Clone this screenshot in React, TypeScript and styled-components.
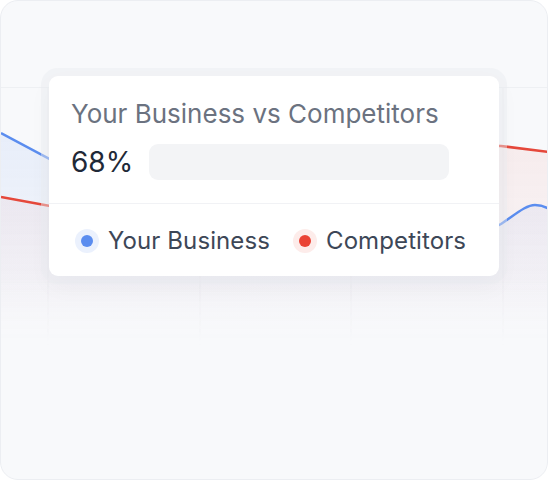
import styled, { createGlobalStyle } from "styled-components";

const GlobalStyle = createGlobalStyle`
  * {
    box-sizing: border-box;
  }

  body {
    margin: 0;
    background-color: #ffffff;
    font-family: Inter, "Noto Sans", "Liberation Sans", sans-serif;
  }
`;

const Frame = styled.div`
  position: relative;
  width: 548px;
  height: 480px;
  background-color: #f8f9fb;
  border: 1px solid #eceef2;
  border-radius: 18px;
  overflow: hidden;
`;

const Chart = styled.div`
  position: absolute;
  left: 0;
  top: 0;
  width: 100%;
  height: 100%;
  -webkit-mask-image: linear-gradient(to bottom, #000 0%, #000 58%, transparent 72%);
  mask-image: linear-gradient(to bottom, #000 0%, #000 58%, transparent 72%);

  svg {
    display: block;
  }
`;

const Tooltip = styled.div`
  position: absolute;
  left: 48px;
  top: 75px;
  width: 450px;
  height: 200px;
  display: flex;
  flex-direction: column;
  background-color: #ffffff;
  border-radius: 9px;
  box-shadow: 0 0 0 8px rgba(233, 235, 240, 0.45),
    0 10px 24px rgba(15, 23, 42, 0.04);
`;

const Top = styled.div`
  display: flex;
  flex-direction: column;
  gap: 14px;
  padding: 22px 22px 0;
  height: 128px;
  border-bottom: 1.5px solid #f1f2f5;
`;

const Title = styled.h2`
  margin: 0;
  font-size: 26px;
  font-weight: 400;
  line-height: 32px;
  color: #6b7280;
`;

const ValueRow = styled.div`
  display: flex;
  align-items: center;
  gap: 16px;
`;

const Value = styled.span`
  font-size: 28px;
  font-weight: 400;
  line-height: 36px;
  color: #1f2937;
`;

const Bar = styled.div`
  width: 300px;
  height: 36px;
  border-radius: 9px;
  background-color: #f3f4f6;
`;

const Legend = styled.div`
  flex: 1;
  display: flex;
  align-items: center;
  gap: 29px;
  padding: 2px 0 0 32px;
`;

const LegendItem = styled.div`
  display: flex;
  align-items: center;
  gap: 15px;
  font-size: 24px;
  line-height: 30px;
  color: #3d4757;
  letter-spacing: 0.1px;
`;

const Dot = styled.span<{ $color: string; $ring: string }>`
  width: 12px;
  height: 12px;
  border-radius: 50%;
  background-color: ${(props) => props.$color};
  box-shadow: 0 0 0 6px ${(props) => props.$ring};
`;

function ChartDrawing() {
  return (
    <svg width="548" height="480" viewBox="0 0 548 480">
      <defs>
        <linearGradient id="blueFill" x1="0" y1="0" x2="0" y2="1">
          <stop offset="0%" stopColor="#5b8def" stopOpacity="0.1" />
          <stop offset="100%" stopColor="#5b8def" stopOpacity="0" />
        </linearGradient>
        <linearGradient id="redFill" x1="0" y1="0" x2="0" y2="1">
          <stop offset="0%" stopColor="#ea4335" stopOpacity="0.07" />
          <stop offset="100%" stopColor="#ea4335" stopOpacity="0" />
        </linearGradient>
      </defs>
      <line x1="0" y1="86.5" x2="548" y2="86.5" stroke="#eef0f3" />
      {[47, 199, 350, 502].map((x) => (
        <line key={x} x1={x} y1="87" x2={x} y2="380" stroke="#eff0f3" />
      ))}
      <path
        d="M0 196 L60 207 C150 220 260 230 350 180 C420 150 470 143 500 145 L548 151 L548 360 L0 360 Z"
        fill="url(#redFill)"
      />
      <path
        d="M0 132 L60 164 C150 200 250 230 350 250 C420 262 470 240 500 223 C515 213 525 204 534 204 C541 204 545 206 548 208 L548 360 L0 360 Z"
        fill="url(#blueFill)"
      />
      <path
        d="M0 196 L60 207 C150 220 260 230 350 180 C420 150 470 143 500 145 L548 151"
        fill="none"
        stroke="#e5483b"
        strokeWidth="2.5"
      />
      <path
        d="M0 132 L60 164 C150 200 250 230 350 250 C420 262 470 240 500 223 C515 213 525 204 534 204 C541 204 545 206 548 208"
        fill="none"
        stroke="#5b8def"
        strokeWidth="2.5"
      />
    </svg>
  );
}

export default function App() {
  return (
    <>
      <GlobalStyle />
      <Frame>
        <Chart>
          <ChartDrawing />
        </Chart>
        <Tooltip>
          <Top>
            <Title>Your Business vs Competitors</Title>
            <ValueRow>
              <Value>68%</Value>
              <Bar />
            </ValueRow>
          </Top>
          <Legend>
            <LegendItem>
              <Dot $color="#5b8def" $ring="#ebf1fd" />
              Your Business
            </LegendItem>
            <LegendItem>
              <Dot $color="#ea4335" $ring="#fdecea" />
              Competitors
            </LegendItem>
          </Legend>
        </Tooltip>
      </Frame>
    </>
  );
}
